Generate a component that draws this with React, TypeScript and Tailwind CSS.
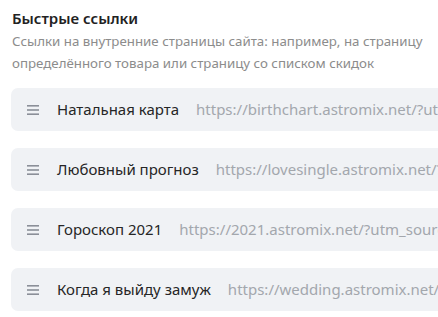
const links = [
  { title: 'Натальная карта', url: 'https://birthchart.astromix.net/?utm_source=yandex&utm_medium=cpc' },
  { title: 'Любовный прогноз', url: 'https://lovesingle.astromix.net/?utm_source=yandex&utm_medium=cpc' },
  { title: 'Гороскоп 2021', url: 'https://2021.astromix.net/?utm_source=yandex&utm_medium=cpc' },
  { title: 'Когда я выйду замуж', url: 'https://wedding.astromix.net/?utm_source=yandex&utm_medium=cpc' },
];

function DragHandle() {
  return (
    <svg width="12" height="10" viewBox="0 0 12 10" className="shrink-0">
      <rect x="0" y="0" width="12" height="1.6" fill="#8b8f98" />
      <rect x="0" y="4.2" width="12" height="1.6" fill="#8b8f98" />
      <rect x="0" y="8.4" width="12" height="1.6" fill="#8b8f98" />
    </svg>
  );
}

export default function App() {
  return (
    <div className="h-[317px] w-[438px] overflow-hidden bg-white font-['Noto_Sans',sans-serif]">
      <div className="pl-3 pt-[6px]">
        <h2 className="text-[15px] font-semibold leading-6 text-[#222]">Быстрые ссылки</h2>
        <p className="mt-[1px] w-[430px] text-[13.3px] leading-[21.5px] text-[#8c8c8c]">
          Ссылки на внутренние страницы сайта: например, на страницу определённого товара или страницу со списком скидок
        </p>
      </div>
      <div className="ml-[11px] mt-[14px] flex w-[600px] flex-col gap-[17px]">
        {links.map((l) => (
          <div key={l.title} className="flex h-[43px] items-center rounded-[7px] bg-[#f0f2f5] pl-4">
            <DragHandle />
            <span className="ml-[18px] whitespace-nowrap text-[15px] text-[#262626]">{l.title}</span>
            <span className="ml-[17px] whitespace-nowrap text-[15px] text-[#a3a7ad]">{l.url}</span>
          </div>
        ))}
      </div>
    </div>
  );
}
